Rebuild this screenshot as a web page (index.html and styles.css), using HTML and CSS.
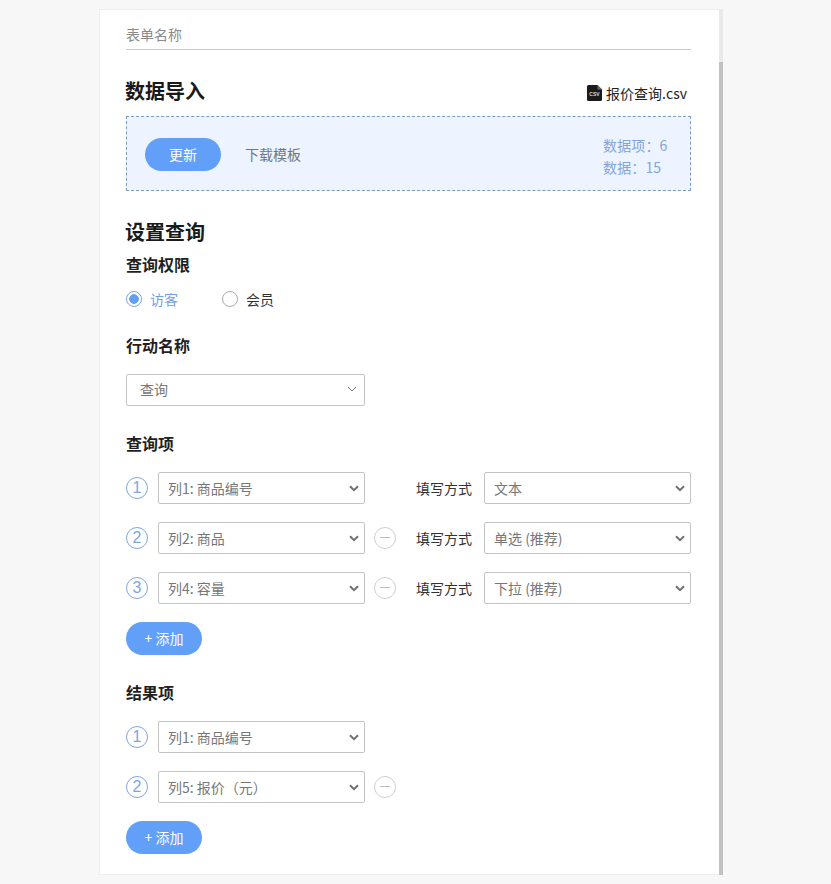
FILE: index.html
```html
<!DOCTYPE html>
<html lang="zh">
<head>
<meta charset="utf-8">
<title>设置查询</title>
<link rel="stylesheet" href="styles.css">
</head>
<body>
<div class="shell">
  <main class="card">
    <div class="form-name">表单名称</div>
    <div class="import-head">
      <h2 class="h-big">数据导入</h2>
      <div class="file">
        <svg class="file-icon" width="15" height="16" viewBox="0 0 15 16"><path d="M1.500 0H10.500L15 4.500V14.500A1.500 1.500 0 0 1 13.500 16H1.500A1.500 1.500 0 0 1 0 14.500V1.500A1.500 1.500 0 0 1 1.500 0Z" fill="#1b1b1b"/><path d="M10.500 0L15 4.500H10.500Z" fill="#666"/><text class="csv-mark" x="7.500" y="10.800" text-anchor="middle">CSV</text></svg>
        <span>报价查询.csv</span>
      </div>
    </div>
    <section class="drop">
      <button class="btn btn-update">更新</button>
      <span class="tpl">下载模板</span>
      <div class="stats">
        <div>数据项：6</div>
        <div>数据：15</div>
      </div>
    </section>

    <h2 class="h-big h-setup">设置查询</h2>
    <h3 class="h-mid h-perm">查询权限</h3>
    <div class="radios">
      <label class="radio on"><span class="dot"></span>访客</label>
      <label class="radio"><span class="dot"></span>会员</label>
    </div>

    <h3 class="h-mid h-action">行动名称</h3>
    <div class="fake-select">
      <span>查询</span>
      <svg width="10" height="6" viewBox="0 0 10 6"><path d="M1 1l4 4 4-4" fill="none" stroke="#777" stroke-width="1"/></svg>
    </div>

    <h3 class="h-mid h-query">查询项</h3>
    <div class="rows">
      <div class="row">
        <span class="num">1</span>
        <select class="sel"><option>列1: 商品编号</option></select>
        <span class="minus-slot"></span>
        <span class="fill-label">填写方式</span>
        <select class="sel"><option>文本</option></select>
      </div>
      <div class="row">
        <span class="num">2</span>
        <select class="sel"><option>列2: 商品</option></select>
        <span class="minus-slot minus"></span>
        <span class="fill-label">填写方式</span>
        <select class="sel"><option>单选 (推荐)</option></select>
      </div>
      <div class="row">
        <span class="num">3</span>
        <select class="sel"><option>列4: 容量</option></select>
        <span class="minus-slot minus"></span>
        <span class="fill-label">填写方式</span>
        <select class="sel"><option>下拉 (推荐)</option></select>
      </div>
    </div>
    <button class="btn btn-add">+ 添加</button>

    <h3 class="h-mid h-result">结果项</h3>
    <div class="rows">
      <div class="row">
        <span class="num">1</span>
        <select class="sel"><option>列1: 商品编号</option></select>
      </div>
      <div class="row">
        <span class="num">2</span>
        <select class="sel"><option>列5: 报价（元）</option></select>
        <span class="minus-slot minus"></span>
      </div>
    </div>
    <button class="btn btn-add">+ 添加</button>
  </main>
  <div class="scroll"><div class="thumb"></div></div>
</div>
</body>
</html>
```
FILE: styles.css
```css
* { box-sizing: border-box; }
html, body { margin: 0; height: 100%; }
body {
  background: #f7f7f7;
  font-family: "Noto Sans CJK SC", "Liberation Sans", sans-serif;
  color: #1c1c1c;
  overflow: hidden;
}
.shell { display: flex; width: 624px; height: 866px; margin: 9px 0 0 99px; }
.card {
  width: 620px;
  height: 866px;
  background: #fff;
  border: 1px solid #eeeeee;
  border-right: 0;
  padding: 0 28px 0 26px;
}
.scroll { width: 4px; height: 866px; background: #e9e9e9; display: flex; flex-direction: column; justify-content: flex-end; }
.thumb { height: 813px; background: #c1c1c1; }

.form-name {
  height: 40px;
  border-bottom: 1px solid #c8c8c8;
  font-size: 14px;
  line-height: 48px;
  color: #8a8a8a;
  overflow: hidden;
}
h2, h3 { margin: 0; }
.h-big { font-size: 20px; line-height: 28px; font-weight: 700; color: #1a1a1a; margin-left: -1px; }
.h-mid { font-size: 16px; line-height: 22px; font-weight: 700; color: #1f1f1f; }

.import-head { display: flex; justify-content: space-between; align-items: center; height: 28px; margin-top: 27px; }
.file { display: flex; align-items: center; gap: 4px; font-size: 14px; color: #222; padding: 4px 4px 0 0; }
.file-icon { flex: none; }
.csv-mark { font: 700 5px "Liberation Sans", sans-serif; fill: #d8d8d8; }

.drop {
  display: flex;
  align-items: center;
  height: 75px;
  margin-top: 11px;
  padding: 1px 22px 0 18px;
  background: #edf4ff;
  border: 1px dashed #7c9cc6;
}
.btn {
  display: block;
  width: 76px;
  height: 33px;
  padding: 0;
  border: 0;
  border-radius: 17px;
  background: #619ff8;
  color: #fff;
  font: 14px/33px "Noto Sans CJK SC", "Liberation Sans", sans-serif;
}
.tpl { margin-left: 24px; font-size: 14px; color: #6f7780; }
.stats { margin-left: auto; padding-top: 4px; font-size: 14px; line-height: 22px; letter-spacing: .15px; color: #82a5dc; width: 65px; white-space: nowrap; }

.h-setup { margin-top: 27px; }
.h-perm { margin-top: 7px; }
.radios { display: flex; margin-top: 13px; height: 22px; }
.radio { display: flex; align-items: center; gap: 8px; width: 96px; font-size: 14px; color: #333; }
.radio .dot { flex: none; width: 16px; height: 16px; border: 1px solid #a9a9a9; border-radius: 50%; background: #fff; }
.radio.on { color: #6e9fe4; }
.radio.on .dot { border-color: #7aa6ea; background: radial-gradient(circle, #619ff8 0 4.500px, #fff 5px); }

.h-action { margin-top: 24px; }
.fake-select {
  display: flex;
  align-items: center;
  justify-content: space-between;
  width: 239px;
  height: 32px;
  margin-top: 18px;
  padding: 0 7px 2px 13px;
  border: 1px solid #c4c4c4;
  border-radius: 2px;
  font-size: 14px;
  color: #777;
}
.h-query { margin-top: 26px; }
.h-result { margin-top: 26px; }
.rows { display: flex; flex-direction: column; gap: 18px; margin-top: 18px; }
.row { display: flex; align-items: center; height: 32px; }
.num {
  flex: none;
  width: 22px;
  height: 22px;
  margin-right: 10px;
  border: 1px solid #7fa6dd;
  border-radius: 50%;
  font-size: 16px;
  line-height: 20px;
  text-align: center;
  color: #7fa6dd;
  font-family: "Liberation Sans", sans-serif;
}
.sel {
  flex: none;
  appearance: none;
  width: 207px;
  height: 32px;
  padding: 0 20px 1px 9px;
  background: #fff url("data:image/svg+xml,%3Csvg xmlns='http://www.w3.org/2000/svg' width='10' height='7' viewBox='0 0 10 7'%3E%3Cpath d='M1 1.200l4 4 4-4' fill='none' stroke='%23707070' stroke-width='2'/%3E%3C/svg%3E") no-repeat right 5px center;
  border: 1px solid #c4c4c4;
  border-radius: 2px;
  font: 14px "Noto Sans CJK SC", "Liberation Sans", sans-serif;
  color: #777;
}
.minus-slot { flex: none; width: 22px; height: 22px; margin-left: 9px; }
.minus { position: relative; border: 1px solid #cfcfcf; border-radius: 50%; }
.minus::after { content: ""; position: absolute; left: 5px; right: 5px; top: 9px; height: 1px; background: #bdbdbd; }
.fill-label { flex: none; width: 68px; margin-left: 20px; font-size: 14px; color: #333; }
.btn-add { margin-top: 18px; }
```
